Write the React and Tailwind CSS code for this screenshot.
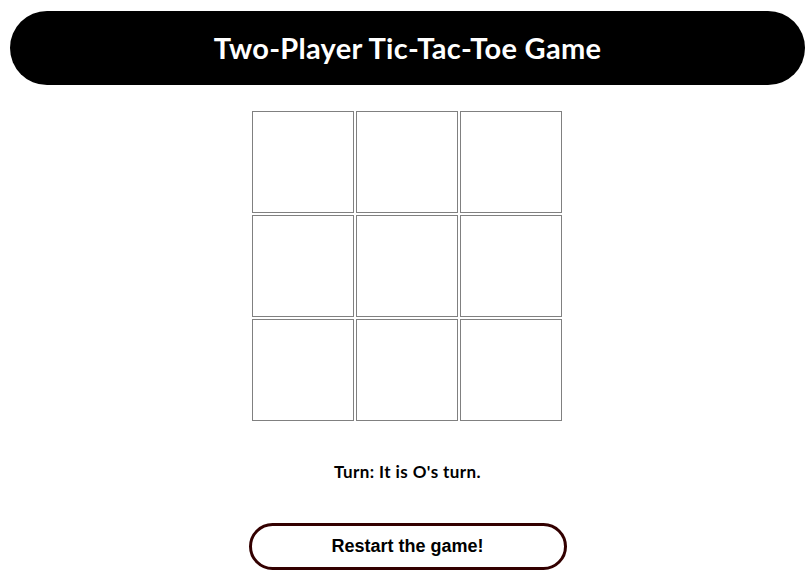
import React from 'react';

export default function App() {
  const [board, setBoard] = React.useState(Array(9).fill(''));
  const [turn, setTurn] = React.useState('O');

  const play = (i) => {
    if (board[i]) return;
    const next = board.slice();
    next[i] = turn;
    setBoard(next);
    setTurn(turn === 'O' ? 'X' : 'O');
  };

  const restart = () => {
    setBoard(Array(9).fill(''));
    setTurn('O');
  };

  return (
    <main className="min-h-[580px] bg-white pl-[10px] pr-[7px] pt-[11px]">
      {/* Header */}
      <header className="h-[74px] rounded-full bg-black flex items-center justify-center">
        <h1 className="text-white text-[29px] font-bold font-['Lato',sans-serif] tracking-[0.3px]">
          Two-Player Tic-Tac-Toe Game
        </h1>
      </header>

      {/* Board */}
      <div className="mt-[25px] flex justify-center pr-[2px]">
        <div className="w-[312px] grid grid-cols-3">
          {board.map((v, i) => (
            <button
              key={i}
              onClick={() => play(i)}
              className="m-px w-[102px] h-[102px] border border-[#808080] bg-white text-5xl font-bold font-['Liberation_Sans',sans-serif]"
            >
              {v}
            </button>
          ))}
        </div>
      </div>

      {/* Status */}
      <p className="mt-[37px] text-center text-[17px] font-bold text-black font-['Lato',sans-serif] tracking-[0.4px]">
        Turn: It is {turn}'s turn.
      </p>

      {/* Restart */}
      <div className="mt-[38px] flex justify-center">
        <button
          onClick={restart}
          className="w-[318px] h-[47px] rounded-full border-[3px] border-[#330000] bg-white text-[18px] font-bold text-black font-['Liberation_Sans',sans-serif]"
        >
          Restart the game!
        </button>
      </div>
    </main>
  );
}
